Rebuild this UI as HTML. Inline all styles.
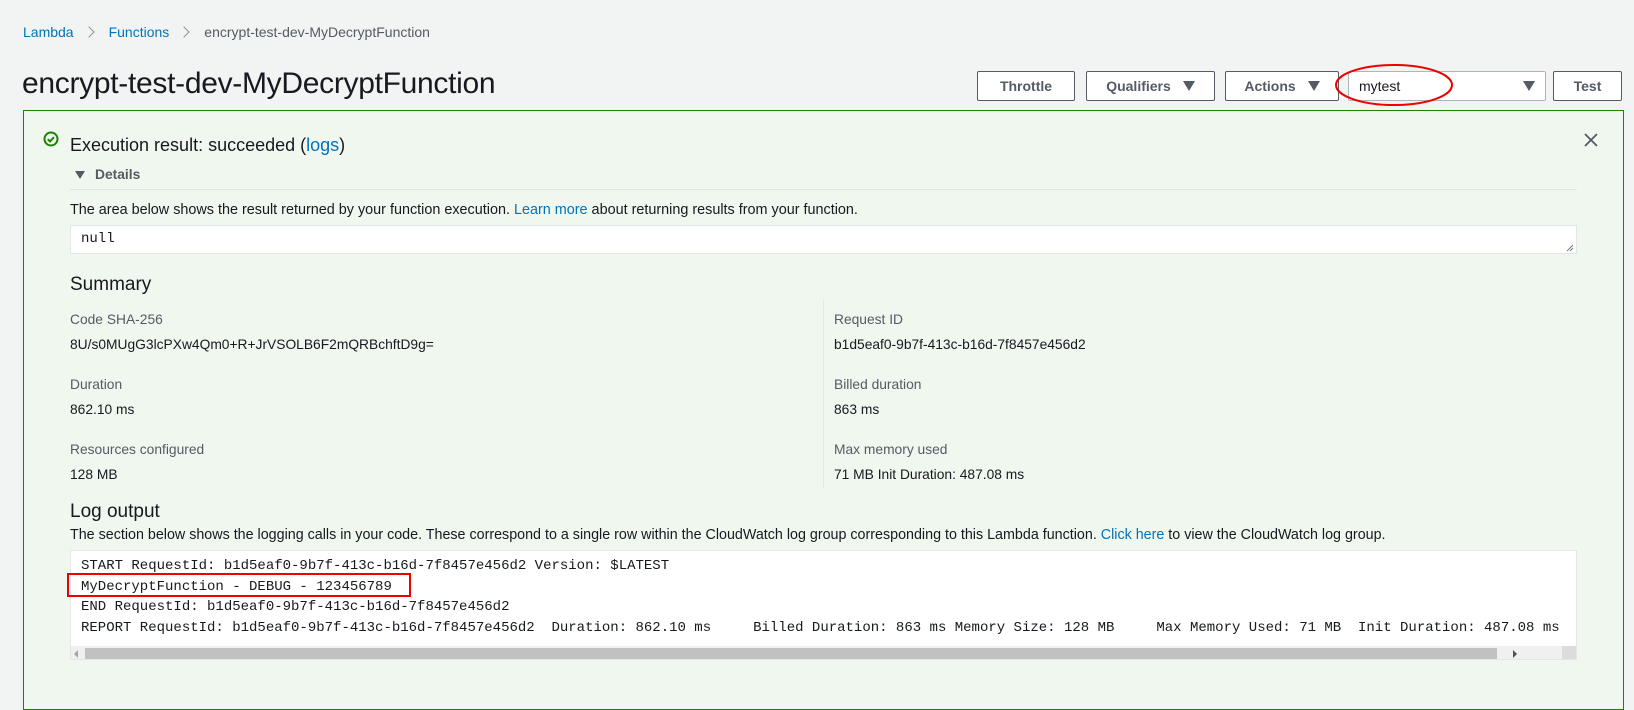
<!DOCTYPE html>
<html><head><meta charset="utf-8"><style>
*{margin:0;padding:0;box-sizing:border-box}
body{width:1634px;height:679px;overflow:hidden;background:#f2f3f3;font-family:"Liberation Sans",sans-serif;color:#16191f;position:relative}
.a{position:absolute;white-space:nowrap}
.lnk{color:#0073bb}
.btn{position:absolute;top:71px;height:30px;border:1px solid #545b64;border-radius:2px;background:#fff;font-weight:bold;font-size:14px;color:#545b64;display:flex;align-items:center;justify-content:center}
.tri{display:inline-block;width:0;height:0;border-left:6px solid transparent;border-right:6px solid transparent;border-top:10px solid #545b64;margin-left:12px}
.lbl{font-size:13.8px;color:#545b64}
.val{font-size:13.8px;color:#16191f}
.mono{font-family:"Liberation Mono",monospace;font-size:14px;color:#16191f}
.chev{display:inline-block;width:8px;height:8px;border-top:1.5px solid #879596;border-right:1.5px solid #879596;transform:rotate(45deg);margin:0 16px 1px 11px}
</style></head><body>
<div class="a" style="left:23px;top:24px;font-size:14px"><span class="lnk">Lambda</span><span class="chev"></span><span class="lnk">Functions</span><span class="chev"></span><span style="color:#545b64">encrypt-test-dev-MyDecryptFunction</span></div>
<div class="a" style="left:22px;top:67px;font-size:30px;letter-spacing:-0.3px">encrypt-test-dev-MyDecryptFunction</div>

<div class="btn" style="left:977px;width:98px">Throttle</div>
<div class="btn" style="left:1086px;width:129px">Qualifiers<span class="tri"></span></div>
<div class="btn" style="left:1225px;width:114px">Actions<span class="tri"></span></div>
<div class="btn" style="left:1348px;width:198px;border-color:#aab7b8;justify-content:space-between;padding:0 10px;font-weight:normal;color:#16191f">mytest<span class="tri" style="margin:0"></span></div>
<div class="btn" style="left:1553px;width:69px">Test</div>
<svg class="a" style="left:1330px;top:62px" width="130" height="48"><ellipse cx="64" cy="23" rx="58" ry="20" fill="none" stroke="#e00" stroke-width="2"/></svg>

<div class="a" style="left:23px;top:110px;width:1601px;height:600px;border:1px solid #1d8102;background:#f0f7ef"></div>
<svg class="a" style="left:43px;top:131px" width="16" height="16"><circle cx="8" cy="8" r="6.5" fill="none" stroke="#1d8102" stroke-width="2"/><path d="M4.8 8.2l2.2 2.2 4-4.2" fill="none" stroke="#1d8102" stroke-width="2"/></svg>
<div class="a" style="left:70px;top:135px;font-size:18px">Execution result: succeeded (<span class="lnk">logs</span>)</div>
<svg class="a" style="left:1584px;top:133px" width="14" height="14"><path d="M1 1L13 13M13 1L1 13" stroke="#545b64" stroke-width="1.8"/></svg>
<div class="a" style="left:75px;top:167px;font-size:13.8px;font-weight:bold;color:#545b64"><span style="display:inline-block;border-left:5px solid transparent;border-right:5px solid transparent;border-top:8px solid #545b64;margin-right:10px"></span>Details</div>
<div class="a" style="left:70px;top:189px;width:1507px;height:1px;background:#dfe4e4"></div>
<div class="a" style="left:70px;top:202px;font-size:14.4px">The area below shows the result returned by your function execution. <span class="lnk">Learn more</span> about returning results from your function.</div>
<div class="a" style="left:70px;top:225px;width:1507px;height:29px;background:#fff;border:1px solid #e1e6e6"></div>
<div class="a mono" style="left:81px;top:231px">null</div>
<svg class="a" style="left:1566px;top:244px" width="8" height="8"><path d="M1 7L7 1M4 7L7 4" stroke="#777" stroke-width="1"/></svg>

<div class="a" style="left:70px;top:274px;font-size:19px">Summary</div>
<div class="a" style="left:823px;top:300px;width:1px;height:188px;background:#e3e8e8"></div>
<div class="a lbl" style="left:70px;top:312px">Code SHA-256</div>
<div class="a val" style="left:70px;top:337px">8U/s0MUgG3lcPXw4Qm0+R+JrVSOLB6F2mQRBchftD9g=</div>
<div class="a lbl" style="left:70px;top:377px">Duration</div>
<div class="a val" style="left:70px;top:402px">862.10 ms</div>
<div class="a lbl" style="left:70px;top:442px">Resources configured</div>
<div class="a val" style="left:70px;top:467px">128 MB</div>
<div class="a lbl" style="left:834px;top:312px">Request ID</div>
<div class="a val" style="left:834px;top:337px">b1d5eaf0-9b7f-413c-b16d-7f8457e456d2</div>
<div class="a lbl" style="left:834px;top:377px">Billed duration</div>
<div class="a val" style="left:834px;top:402px">863 ms</div>
<div class="a lbl" style="left:834px;top:442px">Max memory used</div>
<div class="a val" style="left:834px;top:467px">71 MB Init Duration: 487.08 ms</div>

<div class="a" style="left:70px;top:501px;font-size:19px">Log output</div>
<div class="a" style="left:70px;top:527px;font-size:14.3px">The section below shows the logging calls in your code. These correspond to a single row within the CloudWatch log group corresponding to this Lambda function. <span class="lnk">Click here</span> to view the CloudWatch log group.</div>
<div class="a" style="left:70px;top:550px;width:1507px;height:110px;background:#fff;border:1px solid #e1e6e6;overflow:hidden">
<div class="mono" style="position:absolute;left:10px;top:5px;line-height:20.5px;white-space:pre">START RequestId: b1d5eaf0-9b7f-413c-b16d-7f8457e456d2 Version: $LATEST
MyDecryptFunction - DEBUG - 123456789
END RequestId: b1d5eaf0-9b7f-413c-b16d-7f8457e456d2
REPORT RequestId: b1d5eaf0-9b7f-413c-b16d-7f8457e456d2  Duration: 862.10 ms     Billed Duration: 863 ms Memory Size: 128 MB     Max Memory Used: 71 MB  Init Duration: 487.08 ms</div>
<div style="position:absolute;left:0;top:95px;width:1505px;height:14px;background:#f0f0f0"></div>
<div style="position:absolute;left:14px;top:97px;width:1412px;height:11px;background:#c1c1c1"></div>
<div style="position:absolute;left:3px;top:99px;border-top:4px solid transparent;border-bottom:4px solid transparent;border-right:4px solid #a3a3a3"></div>
<div style="position:absolute;left:1442px;top:99px;border-top:4px solid transparent;border-bottom:4px solid transparent;border-left:4px solid #505050"></div>
<div style="position:absolute;left:1491px;top:95px;width:14px;height:14px;background:#dcdcdc"></div>
</div>
<div class="a" style="left:67px;top:573px;width:344px;height:24px;border:2px solid #e00"></div>
</body></html>
